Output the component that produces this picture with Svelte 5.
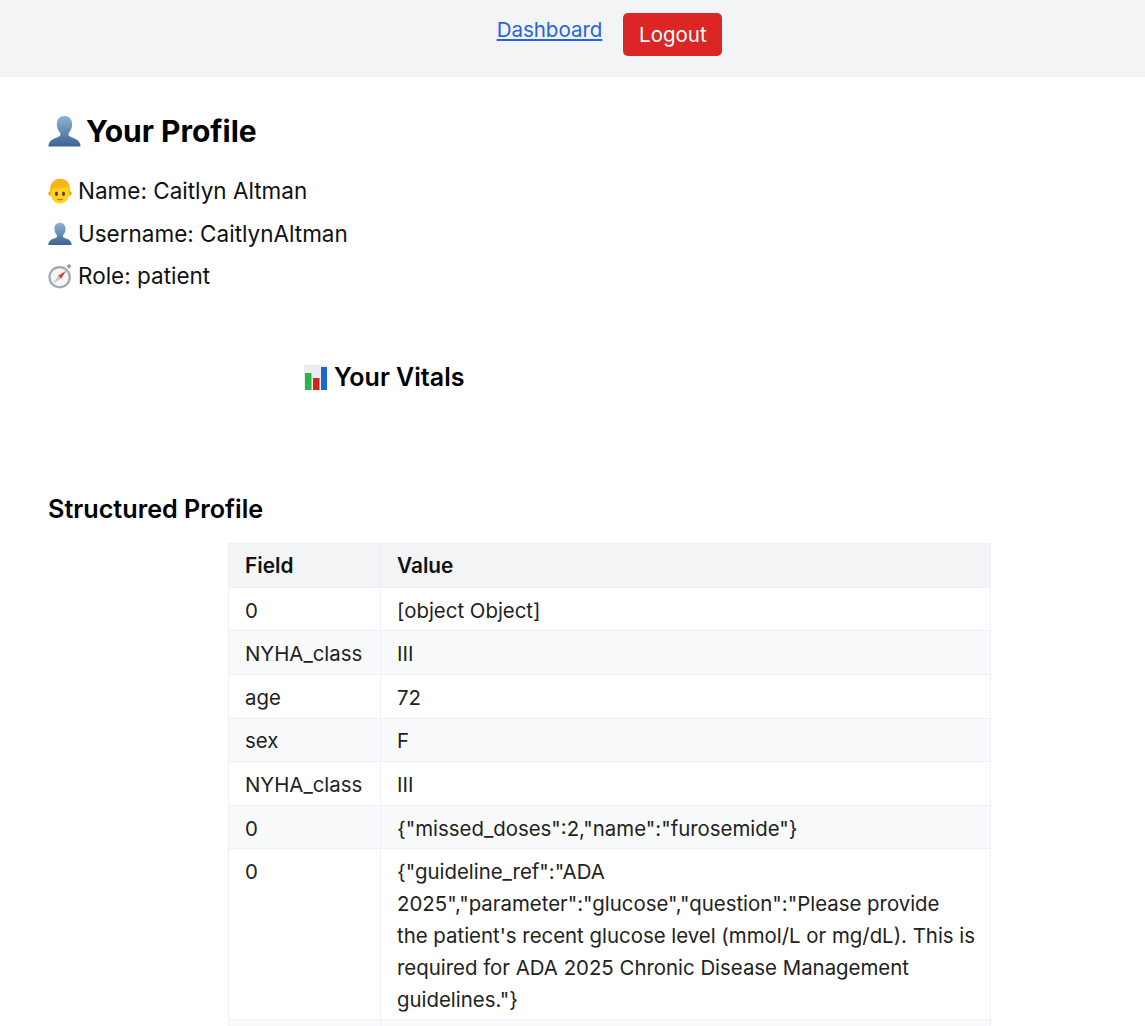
<script>
  const rows = [
    ['0', '[object Object]'],
    ['NYHA_class', 'III'],
    ['age', '72'],
    ['sex', 'F'],
    ['NYHA_class', 'III'],
    ['0', '{"missed_doses":2,"name":"furosemide"}'],
    ['0', '{"guideline_ref":"ADA 2025","parameter":"glucose","question":"Please provide\nthe patient\'s recent glucose level (mmol/L or mg/dL). This is required for ADA 2025 Chronic Disease Management guidelines."}'],
    ['', '']
  ];
</script>

{#snippet bust(size)}
  <svg class="emoji" width={size} height={size} viewBox="0 0 32 32" aria-hidden="true">
    <defs>
      <linearGradient id="bust-{size}" x1="0" y1="0" x2="0" y2="1">
        <stop offset="0" stop-color="#8db4d4" />
        <stop offset="1" stop-color="#3a6590" />
      </linearGradient>
    </defs>
    <path fill="url(#bust-{size})" d="M16 1c-4.600 0-7.400 3.400-7.400 8 0 3.400 1.300 6.400 3 8.100.6.6.7 1.300.5 2.100-.3 1.200-1.500 1.900-3.300 2.500C4.600 23.100 .8 24.700.4 30.500h31.200c-.4-5.800-4.200-7.400-8.400-8.800-1.800-.6-3-1.300-3.300-2.500-.2-.8-.1-1.500.5-2.100 1.700-1.700 3-4.700 3-8.100C23.400 4.400 20.600 1 16 1z" />
  </svg>
{/snippet}

<div class="page">
  <nav class="nav">
    <a href="#dashboard">Dashboard</a>
    <button type="button">Logout</button>
  </nav>

  <main class="content">
    <h1>{@render bust(33)}<span>Your Profile</span></h1>

    <p>
      <svg class="emoji" width="24" height="26" viewBox="0 0 32 34" aria-hidden="true">
        <path fill="#ef9a2a" d="M4 17c-2.200 0-3.500 1.200-3.500 2.900S2 23.500 4.800 23.500zM28 17c2.200 0 3.500 1.200 3.500 2.900S30 23.500 27.200 23.500z" />
        <path fill="#ffd21f" d="M16 33.500c-7 0-12.500-5.500-12.500-13.500V10h25v10c0 8-5.500 13.500-12.500 13.500z" />
        <path fill="#f8b41c" d="M3.500 19.500C1 7.500 7 .5 16.500.5 25.500.5 31 7 28.500 19.500c-.6-3.500-1.500-6.500-3-9-4.500 2.800-10.500 3.600-16 2.300-3 1.200-5 3.200-6 6.700z" />
        <rect x="9.500" y="18" width="3.600" height="5.500" rx="1.800" fill="#4a3520" />
        <rect x="18.900" y="18" width="3.600" height="5.500" rx="1.800" fill="#4a3520" />
        <path fill="none" stroke="#a8661a" stroke-width="1.600" stroke-linecap="round" d="M13 28c1.800.8 4.200.8 6 0" />
      </svg>
      <span>Name: Caitlyn Altman</span>
    </p>
    <p>{@render bust(24)}<span>Username: CaitlynAltman</span></p>
    <p>
      <svg class="emoji" width="24" height="26" viewBox="0 0 32 34" aria-hidden="true">
        <rect x="25.500" y="1.500" width="5" height="5" rx="1" fill="#9da3a8" transform="rotate(45 28 4)" />
        <circle cx="15.500" cy="18.500" r="15" fill="#a4a9ae" />
        <circle cx="15.500" cy="18.500" r="12" fill="#f4f5f5" />
        <path fill="#e5393a" d="M24 10l-6.500 10.500-4-4z" />
        <path fill="#c6cbd0" d="M7 27l6.500-10.500 4 4z" />
      </svg>
      <span>Role: patient</span>
    </p>

    <h3 class="vitals">
      <svg class="emoji" width="25" height="25" viewBox="0 0 25 25" aria-hidden="true">
        <rect x="1" y="0" width="23" height="24.500" fill="#e9eef2" />
        <rect x="2" y="8" width="6.500" height="17" fill="#2fb344" />
        <rect x="10" y="13" width="6.500" height="12" fill="#d0241e" />
        <rect x="18" y="2" width="6" height="23" fill="#1f66cc" />
      </svg>
      <span>Your Vitals</span>
    </h3>

    <h3 class="structured">Structured Profile</h3>

    <table>
      <thead>
        <tr><th class="field">Field</th><th>Value</th></tr>
      </thead>
      <tbody>
        {#each rows as row}
          <tr><td>{row[0]}</td><td>{row[1]}</td></tr>
        {/each}
      </tbody>
    </table>
  </main>
</div>

<style>
  :global(body) {
    margin: 0;
    background: #fff;
  }
  .page {
    height: 1026px;
    overflow: hidden;
    font-family: Inter, "Liberation Sans", sans-serif;
    font-size: 22.5px;
    line-height: 32px;
    color: #111;
  }
  .nav {
    height: 77px;
    box-sizing: border-box;
    padding: 13px 0 0 74px;
    background: #f3f4f6;
    display: flex;
    justify-content: center;
    align-items: flex-start;
    gap: 21px;
  }
  .nav a {
    color: #2563eb;
    font-size: 20.5px;
    line-height: 34px;
  }
  .nav button {
    width: 99px;
    height: 43px;
    border: 0;
    border-radius: 5px;
    background: #dc2626;
    color: #fff;
    font: inherit;
    font-size: 20.5px;
  }
  .content {
    padding: 34px 48px 0;
  }
  h1 {
    margin: 0 0 24px;
    display: flex;
    align-items: center;
    gap: 5px;
    font-size: 30px;
    line-height: 40px;
    font-weight: 700;
    color: #000;
  }
  p {
    margin: 0 0 10.5px;
    display: flex;
    align-items: center;
    gap: 6px;
    height: 32px;
  }
  h3 {
    margin: 0;
    font-size: 25px;
    line-height: 34px;
    font-weight: 600;
    color: #000;
  }
  .vitals {
    margin: 68px 0 0 255px;
    display: flex;
    align-items: center;
    gap: 6px;
  }
  .structured {
    margin-top: 98px;
    font-size: 25.2px;
  }
  .emoji {
    flex: none;
  }
  table {
    margin: 17px 0 0 180px;
    width: 763px;
    table-layout: fixed;
    border-collapse: separate;
    border-spacing: 0;
    border-top: 1px solid #eef0f3;
    border-left: 1px solid #eef0f3;
    font-size: 20.4px;
    line-height: 31.8px;
    color: #222;
  }
  th, td {
    border-right: 1px solid #eef0f3;
    border-bottom: 1px solid #eef0f3;
    padding: 6.9px 12px 3.96px 16px;
    text-align: left;
    vertical-align: top;
    white-space: pre-line;
  }
  th {
    padding: 6.4px 12px 4.46px 16px;
    background: #f3f4f6;
    color: #111;
    font-weight: 600;
    font-size: 20.8px;
  }
  .field {
    width: 123px;
  }
  tbody tr:nth-child(even) {
    background: #f9fafb;
  }
</style>
